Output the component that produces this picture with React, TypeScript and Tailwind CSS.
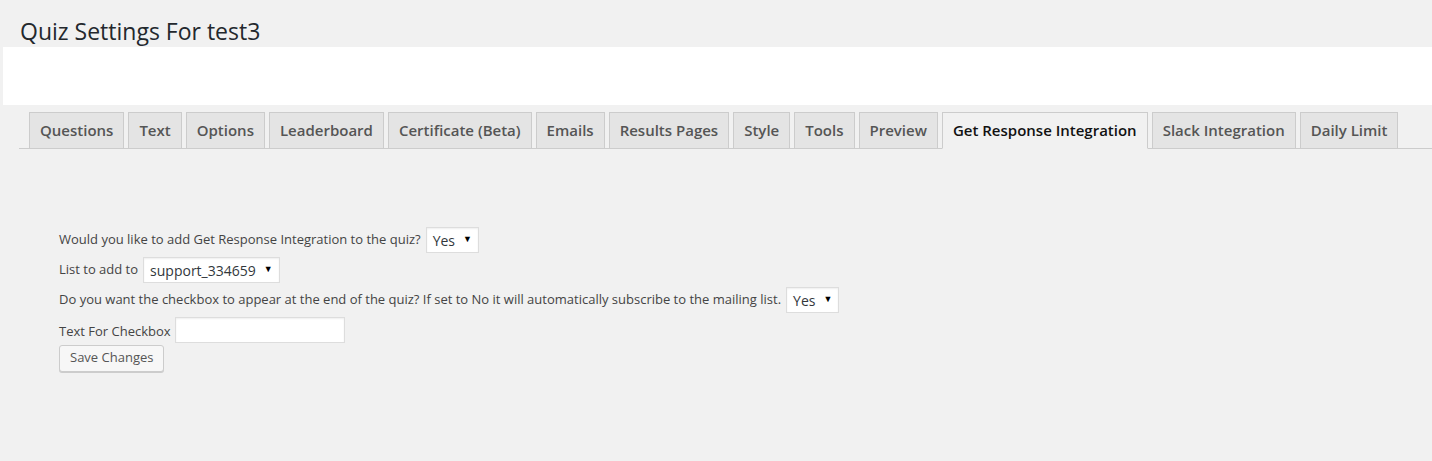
import React from "react"

const tabs = [
  "Questions",
  "Text",
  "Options",
  "Leaderboard",
  "Certificate (Beta)",
  "Emails",
  "Results Pages",
  "Style",
  "Tools",
  "Preview",
  "Get Response Integration",
  "Slack Integration",
  "Daily Limit",
]

const active = "Get Response Integration"

const FakeSelect = ({ value }: { value: string }) => {
  return (
    <span className="inline-flex h-[26px] items-center border border-[#ddd] bg-white pl-[6px] pr-[6px] text-[14px] text-[#32373c] shadow-[inset_0_1px_2px_rgba(0,0,0,0.07)]">
      <span>{value}</span>
      <span className="mb-[3px] ml-[8px] text-[9px] leading-none text-black">▼</span>
    </span>
  )
}

const App = () => {
  return (
    <div className="min-h-[461px] bg-[#f1f1f1] font-['Open_Sans',sans-serif] text-[#444]">
      <h1 className="pl-5 pt-[17px] text-[23px] font-normal leading-[29px] text-[#23282d]">
        Quiz Settings For test3
      </h1>
      <div className="ml-[3px] mt-px h-[58px] bg-white" />

      {/* tabs */}
      <div className="ml-[19px] mt-[7px] flex gap-[4px] border-b border-[#ccc] pl-[10px]">
        {tabs.map((tab) => (
          <div
            key={tab}
            className={`-mb-px flex h-[37px] items-center border border-[#ccc] px-[10px] text-[15px] font-semibold ${
              tab === active
                ? "border-b-[#f1f1f1] bg-[#f1f1f1] text-[#111]"
                : "bg-[#e4e4e4] text-[#555]"
            }`}
          >
            {tab}
          </div>
        ))}
      </div>

      {/* form */}
      <div className="pl-[59px] pt-[76px] text-[13px]">
        <div className="flex h-[30px] items-center">
          <span>Would you like to add Get Response Integration to the quiz?</span>
          <span className="ml-[5px]">
            <FakeSelect value="Yes" />
          </span>
        </div>
        <div className="flex h-[30px] items-center">
          <span>List to add to</span>
          <span className="ml-[5px]">
            <FakeSelect value="support_334659" />
          </span>
        </div>
        <div className="flex h-[30px] items-center">
          <span>
            Do you want the checkbox to appear at the end of the quiz? If set to No it will automatically subscribe to the mailing list.
          </span>
          <span className="ml-[5px]">
            <FakeSelect value="Yes" />
          </span>
        </div>
        <div className="flex h-[30px] items-center">
          <span className="mt-[4px]">Text For Checkbox</span>
          <span className="ml-[4px] h-[26px] w-[170px] border border-[#ddd] bg-white shadow-[inset_0_1px_2px_rgba(0,0,0,0.07)]" />
        </div>
        <button
          type="button"
          className="h-[27px] rounded-[3px] border border-[#ccc] bg-[#f7f7f7] px-[10px] pb-px text-[13px] text-[#555] shadow-[0_1px_0_#ccc]"
        >
          Save Changes
        </button>
      </div>
    </div>
  )
}

export default App
